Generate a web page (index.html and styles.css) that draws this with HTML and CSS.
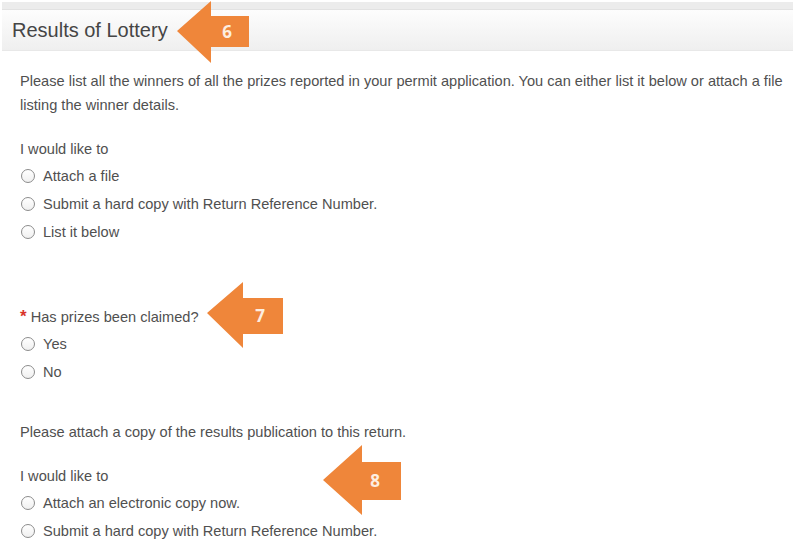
FILE: index.html
```html
<!DOCTYPE html>
<html lang="en">
<head>
    <meta charset="UTF-8">
    <meta name="viewport" content="width=device-width, initial-scale=1.0">
    <title>Results of Lottery</title>
    <link rel="stylesheet" href="styles.css">
</head>
<body>
    <div class="panel">
        <div class="panel-strip"></div>
        <div class="panel-head">
            <h2>Results of Lottery</h2>
        </div>
    </div>

    <div class="content">
        <p class="intro">Please list all the winners of all the prizes reported in your permit application. You can either list it below or attach a file listing the winner details.</p>

        <div class="group">
            <div class="label">I would like to</div>
            <label class="option"><input type="radio" name="winners"> Attach a file</label>
            <label class="option"><input type="radio" name="winners"> Submit a hard copy with Return Reference Number.</label>
            <label class="option"><input type="radio" name="winners"> List it below</label>
        </div>

        <div class="group claimed">
            <div class="label"><span class="required">*</span> Has prizes been claimed?</div>
            <label class="option"><input type="radio" name="claimed"> Yes</label>
            <label class="option"><input type="radio" name="claimed"> No</label>
        </div>

        <p class="note">Please attach a copy of the results publication to this return.</p>

        <div class="group">
            <div class="label">I would like to</div>
            <label class="option"><input type="radio" name="publication"> Attach an electronic copy now.</label>
            <label class="option"><input type="radio" name="publication"> Submit a hard copy with Return Reference Number.</label>
        </div>
    </div>

    <!-- step markers -->
    <svg class="marker marker-6" width="72" height="62" viewBox="0 0 72 62">
        <polygon points="0,30 34,0 34,15 72,15 72,46 34,46 34,62" fill="#ef863a"/>
        <text x="50" y="37" class="marker-num">6</text>
    </svg>
    <svg class="marker marker-7" width="76" height="66" viewBox="0 0 76 66">
        <polygon points="0,31 36,0 36,16 76,16 76,52 36,52 36,66" fill="#ef863a"/>
        <text x="53" y="40" class="marker-num">7</text>
    </svg>
    <svg class="marker marker-8" width="78" height="70" viewBox="0 0 78 70">
        <polygon points="0,35 39,0 39,17 78,17 78,55 39,55 39,70" fill="#ef863a"/>
        <text x="52" y="42" class="marker-num">8</text>
    </svg>
</body>
</html>
```
FILE: styles.css
```css
body {
    font-family: Arial, "Liberation Sans", sans-serif;
    font-size: 14.6px;
    color: #505050;
    background: #fff;
    margin: 0;
    position: relative;
}
.panel {
    margin: 2px 0 0 2px;
}
.panel-strip {
    height: 7px;
    background: #ececec;
}
.panel-head {
    height: 40px;
    border-top: 1px solid #e2e2e2;
    border-bottom: 1px solid #e8e8e8;
    background: linear-gradient(#fdfdfd, #efefef);
}
.panel-head h2 {
    margin: 0;
    padding-left: 10px;
    font-size: 20px;
    font-weight: normal;
    line-height: 40px;
    color: #454545;
}
.content {
    padding: 0 0 0 20px;
}
.intro,
.note {
    margin: 18px 0 0;
    line-height: 24px;
}
.group {
    margin-top: 20px;
}
.claimed {
    margin-top: 59px;
}
.note {
    margin-top: 34px;
}
.label {
    line-height: 24px;
    padding-bottom: 1px;
}
.required {
    color: #d9342b;
    font-size: 17px;
    font-weight: bold;
}
.option {
    display: flex;
    align-items: center;
    height: 28px;
}
.option input {
    appearance: none;
    -webkit-appearance: none;
    width: 14px;
    height: 14px;
    margin: 0 8px 0 1px;
    border: 1px solid #8c8c8c;
    border-radius: 50%;
    background: linear-gradient(#fff, #f0f0f0);
}
.marker {
    position: absolute;
}
.marker-6 {
    left: 177px;
    top: 1px;
}
.marker-7 {
    left: 207px;
    top: 282px;
}
.marker-8 {
    left: 323px;
    top: 445px;
}
.marker-num {
    font-family: "Open Sans", Arial, sans-serif;
    font-weight: bold;
    font-size: 17px;
    fill: #fdeee0;
    text-anchor: middle;
}
```
